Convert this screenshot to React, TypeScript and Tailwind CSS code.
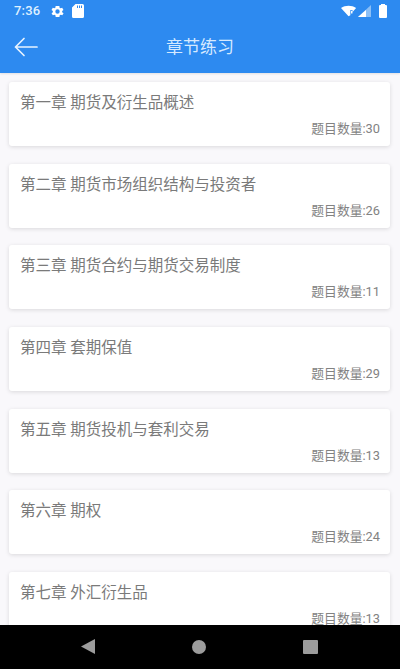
const chapters = [
  { title: "第一章 期货及衍生品概述", count: 30 },
  { title: "第二章 期货市场组织结构与投资者", count: 26 },
  { title: "第三章 期货合约与期货交易制度", count: 11 },
  { title: "第四章 套期保值", count: 29 },
  { title: "第五章 期货投机与套利交易", count: 13 },
  { title: "第六章 期权", count: 24 },
  { title: "第七章 外汇衍生品", count: 13 },
];

function StatusBar() {
  return (
    <div className="flex h-[22px] items-center pl-[14px] pr-[13px] text-white">
      <span className="text-[13px] font-medium tracking-[0.2px] text-[#dff0ff]">7:36</span>
      <svg viewBox="0 0 24 24" className="ml-[10px] h-[15px] w-[15px]" fill="#ffffff">
        <path d="M19.4 13a7.6 7.6 0 0 0 0-2l2.1-1.6-2-3.5-2.500 1a7.500 7.500 0 0 0-1.700-1L15 3.200h-6l-.4 2.700a7.500 7.500 0 0 0-1.700 1l-2.500-1-2 3.500L4.600 11a7.600 7.600 0 0 0 0 2l-2.100 1.600 2 3.500 2.500-1a7.500 7.500 0 0 0 1.700 1l.4 2.700h6l.4-2.700a7.500 7.500 0 0 0 1.700-1l2.500 1 2-3.500zM12 15.500a3.500 3.500 0 1 1 0-7 3.500 3.500 0 0 1 0 7z" />
      </svg>
      <svg viewBox="0 0 12 14" className="ml-[7px] h-[14px] w-[12px]" fill="#ffffff">
        <path d="M3.500 0H10.500A1.500 1.500 0 0 1 12 1.500V12.500A1.500 1.500 0 0 1 10.500 14H1.500A1.500 1.500 0 0 1 0 12.500V3.500z" />
        <path d="M5 1.500h1v2.500H5zM7 1.500h1v2.500H7zM9 1.500h1v2.500H9z" fill="#2d8af0" />
      </svg>
      <div className="flex-1" />
      <svg viewBox="0 0 18 12" className="h-[12px] w-[16px]" fill="#ffffff">
        <path d="M0 2.500C2.500 .8 5.500 0 8.500 0s6 .8 8.500 2.500L13 7.200V5H10.500v5.800L8.500 12z" />
        <rect x="11.300" y="5.800" width="1.600" height="3" fill="#ffffff" />
      </svg>
      <svg viewBox="0 0 13 12" className="ml-[1px] h-[12px] w-[13px]">
        <path d="M13 0V12H0z" fill="#ffffff" fillOpacity="0.45" />
        <path d="M8 5V12H0z" fill="#ffffff" />
      </svg>
      <div className="relative ml-[8px] h-[13px] w-[8px] rounded-[1px] bg-white">
        <div className="absolute left-[2px] top-[-1px] h-[1px] w-[4px] bg-white" />
      </div>
    </div>
  );
}

function Header() {
  return (
    <div className="relative z-10 flex h-[51px] items-center bg-[#2d8af0] pb-[1px] pl-[14px]">
      <svg viewBox="0 0 24 20" className="h-[20px] w-[24px]" fill="none" stroke="#e6f3ff" strokeWidth="1.700" strokeLinecap="round" strokeLinejoin="round">
        <path d="M23 10H1.500M10 1.500 1.500 10 10 18.500" />
      </svg>
      <span className="flex-1 pr-[38px] pt-[2px] text-center text-[17px] text-[#d5e9ff]">章节练习</span>
    </div>
  );
}

function ChapterCard({ title, count }: { title: string; count: number }) {
  return (
    <div className="h-[64px] shrink-0 rounded-[3px] bg-white pl-[11px] pr-[10px] pt-[10px] shadow-[0_1px_4px_rgba(0,0,0,0.13)]">
      <div className="text-[15.500px] leading-[22px] text-[#7a7a7a]">{title}</div>
      <div className="mt-[7px] text-right text-[12.800px] leading-[16px] text-[#828282]">题目数量:{count}</div>
    </div>
  );
}

function NavBar() {
  return (
    <div className="flex h-[44px] shrink-0 items-center bg-black">
      <div className="flex w-full items-center justify-between pb-[1px] pl-[81px] pr-[82px]">
        <svg viewBox="0 0 14 15" className="h-[15px] w-[14px]" fill="#9c9c9c">
          <path d="M14 0V15L0 7.500z" />
        </svg>
        <div className="h-[14px] w-[14px] rounded-full bg-[#9c9c9c]" />
        <div className="h-[14px] w-[15px] rounded-[1px] bg-[#9c9c9c]" />
      </div>
    </div>
  );
}

export default function App() {
  return (
    <div className="flex h-[669px] w-[400px] flex-col overflow-hidden bg-[#f9f8fb] font-['Roboto','Noto_Sans_CJK_SC',sans-serif]">
      <div className="bg-[#2d8af0] shadow-[0_1px_2px_rgba(0,0,0,0.1)]">
        <StatusBar />
        <Header />
      </div>
      <div className="flex min-h-0 flex-1 flex-col gap-[17.700px] overflow-hidden pl-[9px] pr-[10px] pt-[9px]">
        {chapters.map((c) => (
          <ChapterCard key={c.title} title={c.title} count={c.count} />
        ))}
      </div>
      <NavBar />
    </div>
  );
}
